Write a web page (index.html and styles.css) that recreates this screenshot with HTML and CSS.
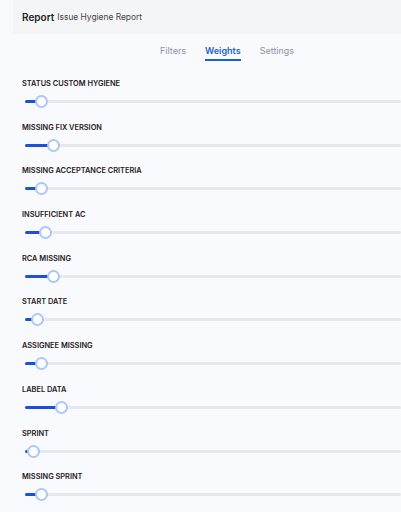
FILE: index.html
```html
<!DOCTYPE html>
<html lang="en">
<head>
    <meta charset="UTF-8">
    <meta name="viewport" content="width=device-width, initial-scale=1.0">
    <title>Issue Hygiene Report - Weights</title>
    <link rel="stylesheet" href="styles.css">
</head>
<body>
    <!-- Report header -->
    <div class="report-header">
        <span class="report-label">Report</span>
        <span class="report-name">Issue Hygiene Report</span>
    </div>

    <!-- Tabs -->
    <nav class="tabs">
        <a class="tab">Filters</a>
        <a class="tab active">Weights</a>
        <a class="tab">Settings</a>
    </nav>

    <!-- Weight sliders -->
    <div class="weights">
        <div class="weight-row">
            <div class="weight-label">Status Custom Hygiene</div>
            <div class="slider"><div class="slider-fill" style="width: 16px;"><span class="slider-thumb"></span></div></div>
        </div>
        <div class="weight-row">
            <div class="weight-label">Missing Fix Version</div>
            <div class="slider"><div class="slider-fill" style="width: 28px;"><span class="slider-thumb"></span></div></div>
        </div>
        <div class="weight-row">
            <div class="weight-label">Missing Acceptance Criteria</div>
            <div class="slider"><div class="slider-fill" style="width: 16px;"><span class="slider-thumb"></span></div></div>
        </div>
        <div class="weight-row">
            <div class="weight-label">Insufficient AC</div>
            <div class="slider"><div class="slider-fill" style="width: 20px;"><span class="slider-thumb"></span></div></div>
        </div>
        <div class="weight-row">
            <div class="weight-label">RCA Missing</div>
            <div class="slider"><div class="slider-fill" style="width: 28px;"><span class="slider-thumb"></span></div></div>
        </div>
        <div class="weight-row">
            <div class="weight-label">Start Date</div>
            <div class="slider"><div class="slider-fill" style="width: 12px;"><span class="slider-thumb"></span></div></div>
        </div>
        <div class="weight-row">
            <div class="weight-label">Assignee Missing</div>
            <div class="slider"><div class="slider-fill" style="width: 16px;"><span class="slider-thumb"></span></div></div>
        </div>
        <div class="weight-row">
            <div class="weight-label">Label Data</div>
            <div class="slider"><div class="slider-fill" style="width: 36px;"><span class="slider-thumb"></span></div></div>
        </div>
        <div class="weight-row">
            <div class="weight-label">Sprint</div>
            <div class="slider"><div class="slider-fill" style="width: 8px;"><span class="slider-thumb"></span></div></div>
        </div>
        <div class="weight-row">
            <div class="weight-label">Missing Sprint</div>
            <div class="slider"><div class="slider-fill" style="width: 16px;"><span class="slider-thumb"></span></div></div>
        </div>
    </div>
</body>
</html>
```

FILE: styles.css
```css
/* Global Styles */
* {
    box-sizing: border-box;
    font-family: Inter, "Noto Sans", Arial, sans-serif;
}

body {
    margin: 0;
    padding: 0;
    background-color: #f9fafd;
    color: #1f2023;
    overflow: hidden;
}

/* Report Header */
.report-header {
    margin-left: 13px;
    height: 34px;
    padding-left: 9px;
    display: flex;
    align-items: center;
    gap: 3px;
    background-color: #f4f5f7;
}

.report-label {
    font-size: 10px;
    font-weight: 600;
    color: #222;
}

.report-name {
    font-size: 8.4px;
    color: #444;
}

/* Tabs */
.tabs {
    display: flex;
    gap: 19px;
    padding-left: 160px;
    height: 28px;
    align-items: flex-start;
    padding-top: 11px;
}

.tab {
    font-size: 9px;
    color: #8c94a6;
    padding-bottom: 3px;
    cursor: pointer;
}

.tab.active {
    color: #1b5fd1;
    font-weight: 600;
    border-bottom: 2px solid #1b5fd1;
}

/* Weights */
.weights {
    padding: 17px 0 0 22px;
}

.weight-row {
    height: 43.7px;
}

.weight-label {
    font-size: 7.4px;
    font-weight: 600;
    text-transform: uppercase;
    color: #1f2023;
    line-height: 10px;
}

/* Slider */
.slider {
    position: relative;
    margin: 11px 0 0 3px;
    height: 3px;
    border-radius: 2px;
    background-color: #e6e8ee;
}

.slider-fill {
    position: relative;
    height: 3px;
    border-radius: 2px;
    background-color: #1d4fd7;
}

.slider-thumb {
    position: absolute;
    right: -6.5px;
    top: -5px;
    width: 13px;
    height: 13px;
    border-radius: 50%;
    border: 2px solid #aac7f6;
    background-color: #fff;
}
```
